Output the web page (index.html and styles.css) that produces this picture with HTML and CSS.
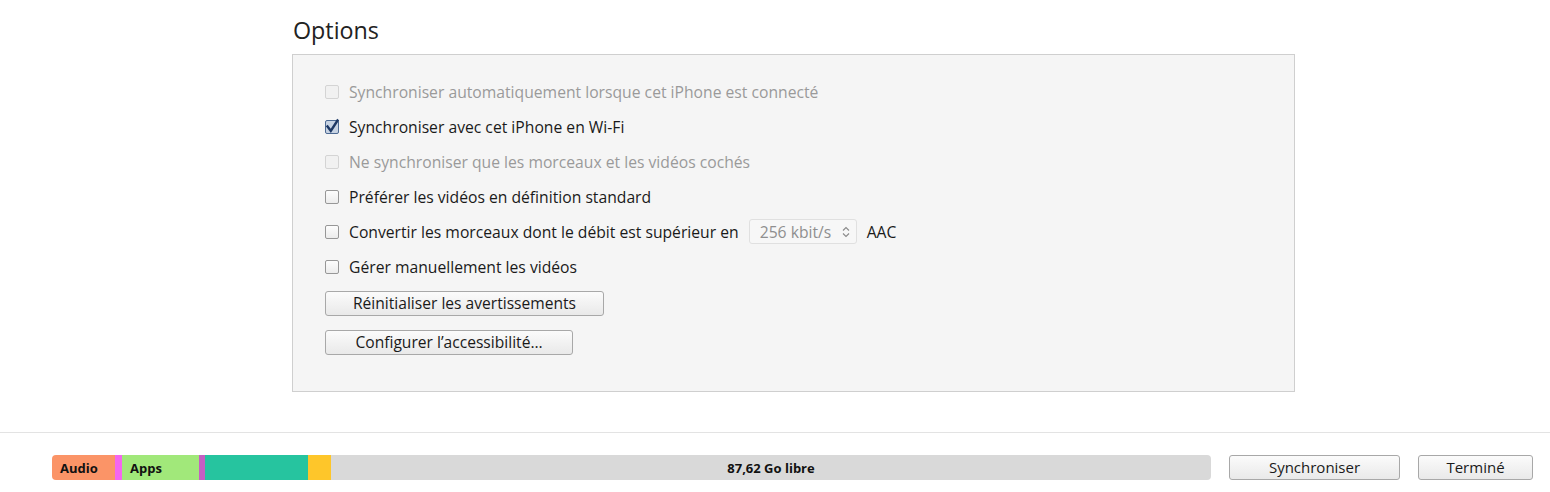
FILE: index.html
```html
<!DOCTYPE html>
<html lang="fr">
<head>
<meta charset="utf-8">
<link rel="stylesheet" href="styles.css">
</head>
<body>
<main class="main">
  <h2 class="title">Options</h2>
  <section class="box">
    <div class="row disabled"><span class="cb"></span><span>Synchroniser automatiquement lorsque cet iPhone est connecté</span></div>
    <div class="row"><span class="cb checked"><svg class="tick" viewBox="0 0 14 14" width="14" height="14"><path d="M2.5 6.5 L5.8 10.8 L12.5 0.5" fill="none" stroke="#1c3764" stroke-width="2.4" stroke-linecap="square"/></svg></span><span>Synchroniser avec cet iPhone en Wi-Fi</span></div>
    <div class="row disabled"><span class="cb"></span><span>Ne synchroniser que les morceaux et les vidéos cochés</span></div>
    <div class="row"><span class="cb"></span><span>Préférer les vidéos en définition standard</span></div>
    <div class="row"><span class="cb"></span><span>Convertir les morceaux dont le débit est supérieur en</span><span class="select">256 kbit/s<svg class="arrows" viewBox="0 0 8 12" width="8" height="12"><path d="M1 4.5 L4 1.5 L7 4.5 M1 7.5 L4 10.5 L7 7.5" fill="none" stroke="#8a8a8a" stroke-width="1.1"/></svg></span><span>AAC</span></div>
    <div class="row"><span class="cb"></span><span>Gérer manuellement les vidéos</span></div>
    <div class="btnrow"><button class="btn reset">Réinitialiser les avertissements</button></div>
    <div class="btnrow"><button class="btn access">Configurer l’accessibilité…</button></div>
  </section>
</main>
<footer class="footer">
  <div class="bar">
    <div class="seg audio">Audio</div>
    <div class="seg pink"></div>
    <div class="seg apps">Apps</div>
    <div class="seg purple"></div>
    <div class="seg teal"></div>
    <div class="seg yellow"></div>
    <div class="seg free">87,62 Go libre</div>
  </div>
  <button class="btn fbtn sync">Synchroniser</button>
  <button class="btn fbtn done">Terminé</button>
</footer>
</body>
</html>
```
FILE: styles.css
```css
* { box-sizing: border-box; }
html, body { margin: 0; padding: 0; background: #ffffff; }
body {
  font-family: "Open Sans", "Noto Sans", sans-serif;
  color: #1a1a1a;
  width: 1550px;
  height: 492px;
  overflow: hidden;
}
.main {
  padding-left: 292px;
  padding-top: 14px;
}
.title {
  margin: 0 0 0 1px;
  font-weight: 400;
  font-size: 23.3px;
  line-height: 32px;
  height: 40px;
  color: #222;
}
.box {
  width: 1003px;
  height: 338px;
  background: #f5f5f5;
  border: 1px solid #cfcfcf;
  padding: 19px 0 0 32px;
}
.row {
  display: flex;
  align-items: center;
  height: 35px;
  font-size: 15.7px;
  color: #1a1a1a;
}
.row.disabled { color: #9a9a9a; }
.cb {
  width: 14px;
  height: 14px;
  border: 1px solid #979797;
  border-radius: 2px;
  background: linear-gradient(#fdfdfd, #ececec);
  margin-right: 10px;
  flex: none;
  display: flex;
}
.row.disabled .cb { border-color: #d4d4d4; background: #f1f1f1; }
.cb.checked {
  background: #c7d3e3;
  border-color: #4d6a93;
}
.tick { overflow: visible; margin: -1px; flex: none; }
.select {
  display: inline-flex;
  align-items: center;
  height: 25px;
  width: 108px;
  margin: 0 10px 0 10px;
  padding-left: 10px;
  border: 1px solid #e0e0e0;
  border-radius: 3px;
  background: #f7f7f7;
  color: #8f8f8f;
}
.arrows { margin-left: auto; margin-right: 6px; }
.btnrow { height: 39px; display: flex; align-items: center; }
.btn {
  font-family: "Open Sans", "Noto Sans", sans-serif;
  font-size: 15.6px;
  color: #1a1a1a;
  height: 25px;
  padding: 0;
  border: 1px solid #a8a8a8;
  border-radius: 3px;
  background: linear-gradient(#fbfbfb, #e9e9e9);
  line-height: 1;
}
.reset { width: 279px; }
.access { width: 248px; }
.footer {
  margin-top: 40px;
  border-top: 1px solid #e3e3e3;
  padding: 22px 0 0 52px;
  display: flex;
  align-items: center;
}
.bar {
  width: 1159px;
  height: 25px;
  display: flex;
  border-radius: 4px;
  overflow: hidden;
  font-family: "Open Sans", "Noto Sans", sans-serif;
  font-weight: 700;
  font-size: 13px;
  color: #111;
}
.seg { height: 100%; display: flex; align-items: center; }
.audio { width: 63px; background: #fb9467; padding-left: 8px; }
.pink { width: 7px; background: #f466ee; }
.apps { width: 77px; background: #a1e87a; padding-left: 8px; }
.purple { width: 6px; background: #c55fc3; }
.teal { width: 103px; background: #26c49f; }
.yellow { width: 23px; background: #fec62a; }
.free { flex: 1; background: #d9d9d9; justify-content: center; }
.fbtn { font-size: 15px; }
.sync { width: 171px; margin-left: 18px; }
.done { width: 115px; margin-left: 18px; }
```
